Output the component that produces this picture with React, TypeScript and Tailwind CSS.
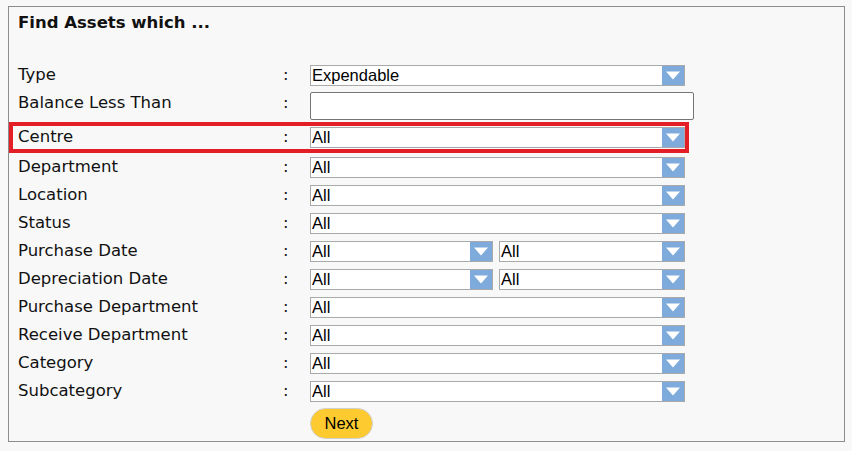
import React from "react";

const verdana = "font-['DejaVu_Sans',Verdana,sans-serif]";
const arial = "font-['Liberation_Sans',Arial,sans-serif]";

function Arrow() {
  return (
    <span className="flex h-full w-[22px] shrink-0 items-center justify-center bg-[#7fabdc]">
      <svg width="16" height="9" viewBox="0 0 16 9">
        <path d="M1 0.5 L15 0.5 L8 8.5 Z" fill="#ffffff" />
      </svg>
    </span>
  );
}

function Select({ value, w }: { value: string; w: string }) {
  return (
    <div
      className={`flex h-[21px] ${w} items-stretch border border-[#a9a9a9] bg-white ${arial} text-[16.5px] leading-[19px] text-black`}
    >
      <span className="flex-1 pl-px">{value}</span>
      <Arrow />
    </div>
  );
}

function Row({
  label,
  children,
  highlight,
}: {
  label: string;
  children: React.ReactNode;
  highlight?: boolean;
}) {
  return (
    <div
      className={`flex w-[680px] items-center border-4 ${
        highlight ? "h-[31px] border-[#e41e26]" : "h-[28px] border-transparent"
      }`}
    >
      <span className="w-[270px] shrink-0 pl-[5px]">{label}</span>
      <span className="w-[27px] shrink-0">:</span>
      {children}
    </div>
  );
}

export default function App() {
  const rows = ["Department", "Location", "Status"];
  const rows2 = [
    "Purchase Department",
    "Receive Department",
    "Category",
    "Subcategory",
  ];

  return (
    <div className={`min-h-[451px] w-[852px] bg-[#f8f8f8] pt-[6px] pl-[8px] ${verdana} text-[16.5px] text-[#111]`}>
      <div className="h-[436px] w-[837px] border border-[#8c8c8c]">
        <h1 className="pt-[5px] pl-[9px] text-[16.5px] font-bold leading-[21px]">
          Find Assets which ...
        </h1>
        <div className="mt-[28px] flex flex-col">
          <Row label="Type">
            <Select value="Expendable" w="w-[375px]" />
          </Row>
          <div className="flex h-[33px] w-[680px] items-start border-x-4 border-transparent">
            <span className="w-[270px] shrink-0 pl-[5px] leading-[28px]">Balance Less Than</span>
            <span className="w-[27px] shrink-0 leading-[28px]">:</span>
            <input
              className="mt-[3px] h-[28px] w-[384px] shrink-0 rounded-[2px] border border-[#767676] bg-white"
              type="text"
            />
          </div>
          <Row label="Centre" highlight>
            <Select value="All" w="w-[375px]" />
          </Row>
          {rows.map((r) => (
            <Row key={r} label={r}>
              <Select value="All" w="w-[375px]" />
            </Row>
          ))}
          {["Purchase Date", "Depreciation Date"].map((r) => (
            <Row key={r} label={r}>
              <div className="flex gap-[6px]">
                <Select value="All" w="w-[183px]" />
                <Select value="All" w="w-[186px]" />
              </div>
            </Row>
          ))}
          {rows2.map((r) => (
            <Row key={r} label={r}>
              <Select value="All" w="w-[375px]" />
            </Row>
          ))}
          <div className="pt-[3px] pl-[301px]">
            <button
              className={`h-[31px] w-[63px] rounded-full border border-[#d0d0d0] bg-[#fdca30] ${arial} text-[16.5px] text-black`}
            >
              Next
            </button>
          </div>
        </div>
      </div>
    </div>
  );
}
